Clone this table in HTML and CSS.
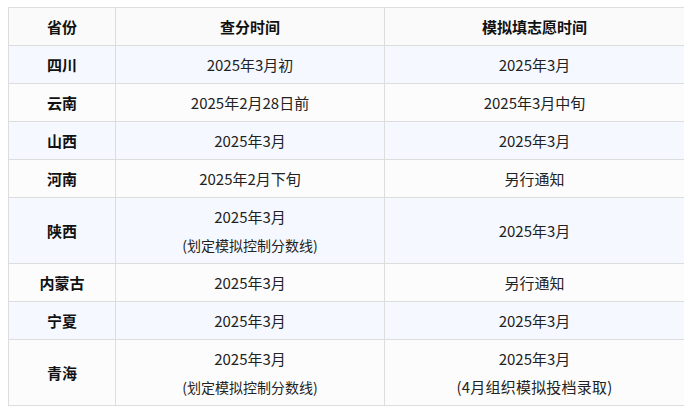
FILE: index.html
```html
<!DOCTYPE html>
<html lang="zh-CN">
<head>
<meta charset="utf-8">
<title>2025 模拟填志愿时间</title>
<link rel="stylesheet" href="styles.css">
</head>
<body>
<table class="schedule">
  <colgroup>
    <col class="c-prov">
    <col class="c-score">
    <col class="c-fill">
  </colgroup>
  <thead>
    <tr><th>省份</th><th>查分时间</th><th>模拟填志愿时间</th></tr>
  </thead>
  <tbody>
    <tr class="alt"><th>四川</th><td>2025年3月初</td><td>2025年3月</td></tr>
    <tr><th>云南</th><td>2025年2月28日前</td><td>2025年3月中旬</td></tr>
    <tr class="alt"><th>山西</th><td>2025年3月</td><td>2025年3月</td></tr>
    <tr><th>河南</th><td>2025年2月下旬</td><td>另行通知</td></tr>
    <tr class="alt"><th>陕西</th><td>2025年3月<br><span class="note">(划定模拟控制分数线)</span></td><td>2025年3月</td></tr>
    <tr><th>内蒙古</th><td>2025年3月</td><td>另行通知</td></tr>
    <tr class="alt"><th>宁夏</th><td>2025年3月</td><td>2025年3月</td></tr>
    <tr><th>青海</th><td>2025年3月<br><span class="note">(划定模拟控制分数线)</span></td><td>2025年3月<br><span class="note-wide">(4月组织模拟投档录取)</span></td></tr>
  </tbody>
</table>
</body>
</html>
```
FILE: styles.css
```css
html, body {
  background: #ffffff;
}
body {
  margin: 7px 8px 8px;
  font-family: "Noto Sans CJK SC", "Noto Sans", sans-serif;
  font-size: 15px;
  color: #222222;
}
.schedule {
  width: 676px;
  border-collapse: collapse;
  table-layout: fixed;
}
.c-prov { width: 107px; }
.c-score { width: 269px; }
.c-fill { width: 300px; }
.schedule th,
.schedule td {
  border: 1px solid #dddddd;
  padding: 5px 10px 4px;
  line-height: 28px;
  text-align: center;
  vertical-align: middle;
}
.schedule th {
  font-weight: 700;
  color: #111111;
}
.schedule td {
  font-weight: 400;
}
.note {
  font-size: 14px;
}
.note-wide {
  font-size: 15px;
  letter-spacing: 0.2px;
}
.schedule thead tr {
  background: #fafafa;
}
.schedule tbody tr {
  background: #fcfcfc;
}
.schedule tbody tr.alt {
  background: #f5f9ff;
}
```
